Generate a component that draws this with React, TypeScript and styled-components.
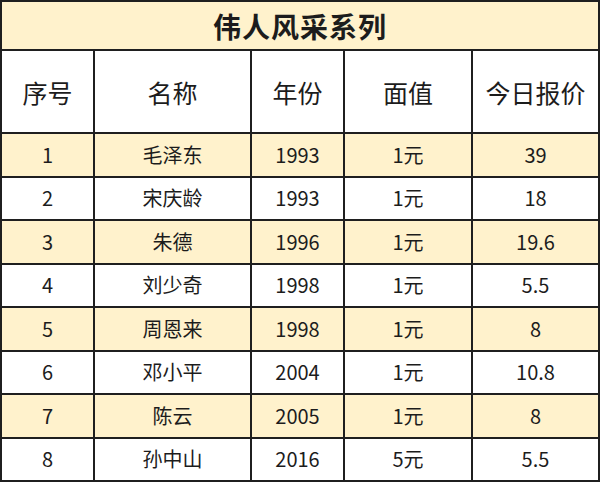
import React from 'react'
import styled, { createGlobalStyle } from 'styled-components'

const GlobalStyle = createGlobalStyle`
  html, body {
    margin: 0;
    padding: 0;
    background: #ffffff;
  }
  body {
    font-family: "Noto Sans CJK SC", "Noto Sans", sans-serif;
    color: #1c1c1c;
  }
`

type Row = {
  no: number
  name: string
  year: string
  face: string
  price: string
}

const rows: Row[] = [
  { no: 1, name: '毛泽东', year: '1993', face: '1元', price: '39' },
  { no: 2, name: '宋庆龄', year: '1993', face: '1元', price: '18' },
  { no: 3, name: '朱德', year: '1996', face: '1元', price: '19.6' },
  { no: 4, name: '刘少奇', year: '1998', face: '1元', price: '5.5' },
  { no: 5, name: '周恩来', year: '1998', face: '1元', price: '8' },
  { no: 6, name: '邓小平', year: '2004', face: '1元', price: '10.8' },
  { no: 7, name: '陈云', year: '2005', face: '1元', price: '8' },
  { no: 8, name: '孙中山', year: '2016', face: '5元', price: '5.5' },
]

const headers = ['序号', '名称', '年份', '面值', '今日报价']
const colWidths = [93, 157, 93, 128, 127]

const Sheet = styled.table`
  width: 598px;
  border-collapse: collapse;
  table-layout: fixed;

  td,
  th {
    border: 2px solid #1f1f1f;
    padding: 0;
    text-align: center;
    vertical-align: middle;
  }
`

const TitleCell = styled.th`
  height: 47px;
  background: #fff2cc;
  font-size: 28px;
  font-weight: 700;
  letter-spacing: 1px;
`

const HeadCell = styled.th`
  height: 81px;
  background: #ffffff;
  font-size: 25px;
  font-weight: 400;
`

const DataRow = styled.tr<{ $shaded: boolean }>`
  height: 43.5px;
  background: ${(p) => (p.$shaded ? '#fff2cc' : '#ffffff')};
`

const Cell = styled.td`
  font-size: 20px;
  line-height: 1;
`

export default function App() {
  return (
    <>
      <GlobalStyle />
      <Sheet>
        <colgroup>
          {colWidths.map((w, i) => (
            <col key={i} style={{ width: w }} />
          ))}
        </colgroup>
        <thead>
          <tr>
            <TitleCell colSpan={5}>伟人风采系列</TitleCell>
          </tr>
          <tr>
            {headers.map((h) => (
              <HeadCell key={h}>{h}</HeadCell>
            ))}
          </tr>
        </thead>
        <tbody>
          {rows.map((r, i) => (
            <DataRow key={r.no} $shaded={i % 2 === 0}>
              <Cell>{r.no}</Cell>
              <Cell>{r.name}</Cell>
              <Cell>{r.year}</Cell>
              <Cell>{r.face}</Cell>
              <Cell>{r.price}</Cell>
            </DataRow>
          ))}
        </tbody>
      </Sheet>
    </>
  )
}
